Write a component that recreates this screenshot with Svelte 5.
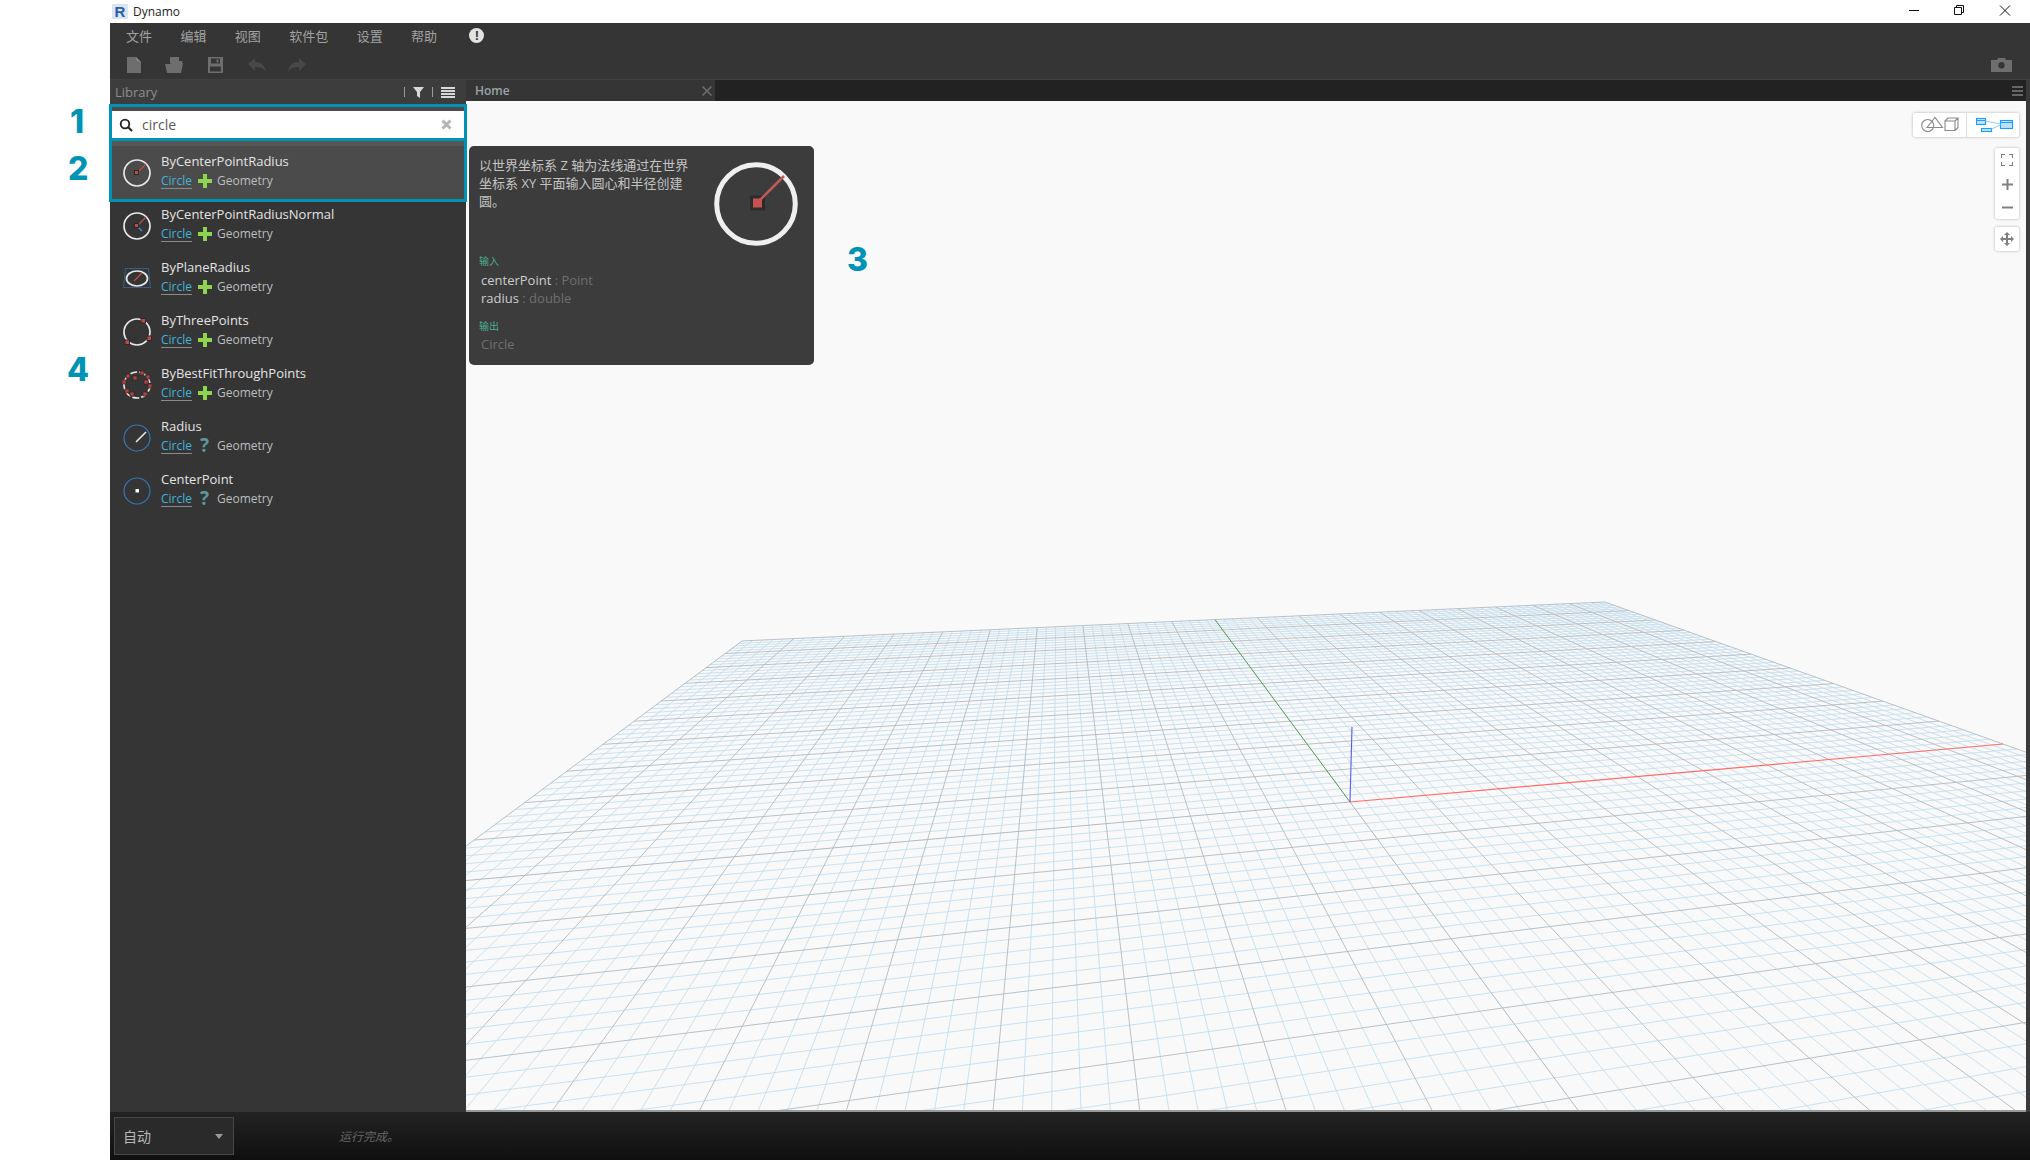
<script>
	const menus = ['文件', '编辑', '视图', '软件包', '设置', '帮助'];
	const results = [
		{ name: 'ByCenterPointRadius', kind: 'create', icon: 'radius' },
		{ name: 'ByCenterPointRadiusNormal', kind: 'create', icon: 'normal' },
		{ name: 'ByPlaneRadius', kind: 'create', icon: 'plane' },
		{ name: 'ByThreePoints', kind: 'create', icon: 'three' },
		{ name: 'ByBestFitThroughPoints', kind: 'create', icon: 'fit' },
		{ name: 'Radius', kind: 'query', icon: 'qradius' },
		{ name: 'CenterPoint', kind: 'query', icon: 'qcenter' }
	];

	// floor grid: unit square -> screen quad (origin, red end, far corner, green end)
	const q = [[1350, 802], [2003, 744], [1605, 602], [1215, 619.6]];
	const sx = q[0][0] - q[1][0] + q[2][0] - q[3][0];
	const sy = q[0][1] - q[1][1] + q[2][1] - q[3][1];
	const dx1 = q[1][0] - q[2][0], dx2 = q[3][0] - q[2][0];
	const dy1 = q[1][1] - q[2][1], dy2 = q[3][1] - q[2][1];
	const den = dx1 * dy2 - dx2 * dy1;
	const g = (sx * dy2 - dx2 * sy) / den;
	const h = (dx1 * sy - sx * dy1) / den;
	const a = q[1][0] - q[0][0] + g * q[1][0], b = q[3][0] - q[0][0] + h * q[3][0];
	const d = q[1][1] - q[0][1] + g * q[1][1], e = q[3][1] - q[0][1] + h * q[3][1];

	function project(u, v) {
		const w = g * u + h * v + 1;
		return [(a * u + b * v + q[0][0]) / w, (d * u + e * v + q[0][1]) / w];
	}

	// cuts the part of a segment that falls behind the camera
	function segment(u1, v1, u2, v2) {
		const w1 = g * u1 + h * v1 + 1;
		const w2 = g * u2 + h * v2 + 1;
		const min = 0.06;
		if (w1 < min && w2 < min) return null;
		if (w1 < min) {
			const t = (min - w1) / (w2 - w1);
			u1 += (u2 - u1) * t;
			v1 += (v2 - v1) * t;
		} else if (w2 < min) {
			const t = (min - w2) / (w1 - w2);
			u2 += (u1 - u2) * t;
			v2 += (v1 - v2) * t;
		}
		const [x1, y1] = project(u1, v1);
		const [x2, y2] = project(u2, v2);
		return { x1, y1, x2, y2 };
	}

	const minor = [];
	const major = [];
	for (let i = -50; i <= 50; i++) {
		const list = i % 5 === 0 ? major : minor;
		if (i === 0) continue;
		const t = i / 50;
		const s1 = segment(t, -1, t, 1);
		const s2 = segment(-1, t, 1, t);
		if (s1) list.push(s1);
		if (s2) list.push(s2);
	}
	const yAxisLow = segment(0, -1, 0, 0);
	const xAxisLow = segment(-1, 0, 0, 0);
</script>

<div class="app">
	<div class="window">
		<header class="titlebar">
			<span class="logo">R</span>
			<span class="title">Dynamo</span>
			<div class="winbtns">
				<svg width="150" height="23" viewBox="0 0 150 23">
					<path d="M29 10.5h10" stroke="#111" fill="none" />
					<path d="M74.500 7.500h7v7h-7zM76.500 7.500v-2h7v7h-2" stroke="#111" fill="none" />
					<path d="M120 5.500l10 10M130 5.500l-10 10" stroke="#111" fill="none" />
				</svg>
			</div>
		</header>

		<nav class="menubar">
			{#each menus as m}
				<span>{m}</span>
			{/each}
			<span class="notice">!</span>
		</nav>

		<div class="toolbar">
			<svg class="tool" width="14" height="16" viewBox="0 0 14 16"><path d="M0 0h9l5 5v11H0z" fill="#6e6e6e" /><path d="M9 0l1 4 4 1z" fill="#8a8a8a" /></svg>
			<svg class="tool open" width="20" height="16" viewBox="0 0 20 16"><path d="M5 0h9v4h4l-1 1v1H5z" fill="#6e6e6e" /><path d="M0 7h5l1-1h12l-2 10H2z" fill="#6e6e6e" /></svg>
			<svg class="tool save" width="15" height="16" viewBox="0 0 15 16"><path fill-rule="evenodd" d="M0 0h15v16H0zM3 1.500v5h9v-5zM2 9.500v5h11v-5z" fill="#6e6e6e" /><path d="M8.500 2.500h2v3h-2z" fill="#6e6e6e" /></svg>
			<svg class="tool undo" width="18" height="14" viewBox="0 0 18 14"><path d="M7 0v4c6 0 10 3 11 10-2-4-6-5-11-5v4L0 6z" fill="#484848" /></svg>
			<svg class="tool redo" width="18" height="14" viewBox="0 0 18 14"><path d="M11 0v4C5 4 1 7 0 14c2-4 6-5 11-5v4l7-7z" fill="#484848" /></svg>
			<svg class="camera" width="21" height="14" viewBox="0 0 21 14"><path fill-rule="evenodd" d="M0 2h6l1-2h7l1 2h6v12H0zM10.500 4a3.200 3.200 0 1 0 0 6.400 3.200 3.200 0 0 0 0-6.400z" fill="#6e6e6e" /></svg>
		</div>

		<div class="main">
			<aside class="sidebar">
				<div class="libhead">
					<span>Library</span>
					<div class="libtools">
						<i class="sep"></i>
						<svg width="11" height="11" viewBox="0 0 11 11"><path d="M0 0h11L7 5v6L4 9V5z" fill="#d8d8d8" /></svg>
						<i class="sep"></i>
						<svg width="14" height="11" viewBox="0 0 14 11"><path d="M0 0h14v2H0zM0 3h14v2H0zM0 6h14v2H0zM0 9h14v2H0z" fill="#d8d8d8" /></svg>
					</div>
				</div>
				<div class="searchwrap">
					<div class="search">
						<svg width="14" height="14" viewBox="0 0 14 14"><circle cx="6" cy="6" r="4.300" fill="none" stroke="#222" stroke-width="1.800" /><path d="M9.200 9.200L13 13" stroke="#222" stroke-width="2" /></svg>
						<span class="query">circle</span>
						<svg class="clear" width="11" height="11" viewBox="0 0 11 11"><path d="M1.500 1.500l8 8M9.500 1.500l-8 8" stroke="#b4b4b4" stroke-width="3" /></svg>
					</div>
				</div>
				<ul class="results">
					{#each results as r, i}
						<li class="row" class:selected={i === 0}>
							<svg class="nodeicon" width="30" height="30" viewBox="0 0 30 30">
								{#if r.icon === 'radius' || r.icon === 'normal'}
									<circle cx="15" cy="15" r="13" fill="none" stroke="#e8e8e8" stroke-width="1.700" />
									<path d="M15 15L24 6" stroke="#c04a4a" stroke-width="1.200" />
									{#if r.icon === 'normal'}
										<path d="M15 15l5 5" stroke="#3f87d0" stroke-width="1.500" />
									{/if}
									<rect x="12.500" y="12.500" width="4" height="4" fill="#c04a4a" stroke="#2a2a2a" />
								{:else if r.icon === 'plane'}
									<path d="M3.500 4.500h23l2 19H1.500z" fill="none" stroke="#3f87d0" stroke-dasharray="1 1" />
									<ellipse cx="15" cy="14.500" rx="10.500" ry="7.500" fill="none" stroke="#e8e8e8" stroke-width="1.700" />
									<path d="M12 17l8-8" stroke="#c04a4a" stroke-width="1.200" />
								{:else if r.icon === 'three'}
									<circle cx="15" cy="15" r="13" fill="none" stroke="#e8e8e8" stroke-width="1.700" />
									<rect x="19" y="1.500" width="4.500" height="4.500" fill="#c04a4a" stroke="#2a2a2a" />
									<rect x="25" y="19" width="4.500" height="4.500" fill="#c04a4a" stroke="#2a2a2a" />
									<rect x="3" y="23" width="4.500" height="4.500" fill="#c04a4a" stroke="#2a2a2a" />
								{:else if r.icon === 'fit'}
									<circle cx="15" cy="15" r="13" fill="none" stroke="#e8e8e8" stroke-width="1.700" stroke-dasharray="7 2" />
									{#each [[5,5],[19,2],[25,6],[12,7],[23,11],[27,15],[1,11],[4,20],[9,23],[22,23]] as p}
										<rect x={p[0] - 1} y={p[1] - 1} width="4" height="4" fill="#b93f3f" stroke="#2a2a2a" stroke-width="0.700" />
									{/each}
								{:else if r.icon === 'qradius'}
									<circle cx="15" cy="15" r="13" fill="none" stroke="#3576b8" stroke-width="1.200" />
									<path d="M14 19L24 9" stroke="#e8e8e8" stroke-width="1.600" />
								{:else}
									<circle cx="15" cy="15" r="13" fill="none" stroke="#3576b8" stroke-width="1.200" />
									<rect x="13.500" y="13" width="3.500" height="3.500" fill="#fff" />
								{/if}
							</svg>
							<div class="rowtext">
								<div class="name">{r.name}</div>
								<div class="sub">
									<span class="cat">Circle</span>
									{#if r.kind === 'create'}
										<svg class="plus" width="14" height="14" viewBox="0 0 14 14"><path d="M5 0h4v5h5v4H9v5H5V9H0V5h5z" fill="#8ed44e" /></svg>
									{:else}
										<span class="qmark">?</span>
									{/if}
									<span class="geo">Geometry</span>
								</div>
							</div>
						</li>
					{/each}
				</ul>
			</aside>

			<section class="workspace">
				<div class="tabs">
					<div class="tab">
						<span>Home</span>
						<svg width="10" height="10" viewBox="0 0 10 10"><path d="M.5.5l9 9M9.500.5l-9 9" stroke="#6f6f6f" stroke-width="1.500" /></svg>
					</div>
					<svg class="tabmenu" width="11" height="10" viewBox="0 0 11 10"><path d="M0 0h11v2H0zM0 4h11v2H0zM0 8h11v2H0z" fill="#666" /></svg>
				</div>
				<div class="canvas">
					<svg class="floor" viewBox="466 101 1560 1009" preserveAspectRatio="none">
						{#each minor as l}
							<line x1={l.x1} y1={l.y1} x2={l.x2} y2={l.y2} stroke="#c6deed" stroke-width="0.900" />
						{/each}
						{#each major as l}
							<line x1={l.x1} y1={l.y1} x2={l.x2} y2={l.y2} stroke="#b0bbc3" stroke-width="0.900" />
						{/each}
						<line x1={yAxisLow.x1} y1={yAxisLow.y1} x2={yAxisLow.x2} y2={yAxisLow.y2} stroke="#b0bbc3" />
						<line x1={xAxisLow.x1} y1={xAxisLow.y1} x2={xAxisLow.x2} y2={xAxisLow.y2} stroke="#b0bbc3" />
						<line x1={q[0][0]} y1={q[0][1]} x2={q[3][0]} y2={q[3][1]} stroke="#4f9a4f" />
						<line x1={q[0][0]} y1={q[0][1]} x2={q[1][0]} y2={q[1][1]} stroke="#ff6c6c" stroke-width="1.200" />
						<line x1="1350" y1="802" x2="1352" y2="727" stroke="#5a5ae6" stroke-width="1.100" />
					</svg>

					<div class="viewtoggle">
						<svg class="geomicon" width="53" height="24" viewBox="0 0 53 24">
							<g fill="none" stroke="#8a8a8a" stroke-width="1.100">
								<circle cx="14.700" cy="12.500" r="6" />
								<path d="M14 14.500L22 4.500l7.500 10z" />
								<path d="M32 8h10v9.500H32zM32 8l3-3h10v9.500l-3 3M42 8l3-3" />
							</g>
						</svg>
						<svg class="graphicon" width="52" height="24" viewBox="0 0 52 24">
							<g fill="#bfe1ff" stroke="#1b9cff" stroke-width="1.100">
								<rect x="9.500" y="5.500" width="9" height="6" />
								<rect x="14.500" y="15.500" width="10" height="3" />
								<rect x="33.500" y="7.500" width="12" height="8" />
							</g>
							<path d="M9.500 7.500h9M33.500 9.500h12" stroke="#1b9cff" fill="none" />
							<path d="M18.500 8l15 3M24.500 16l9-4" stroke="#8ecbff" fill="none" />
						</svg>
					</div>
					<div class="zoomctl">
						<svg width="12" height="12" viewBox="0 0 12 12"><path d="M0 4V0h4M8 0h4v4M12 8v4H8M4 12H0V8" fill="none" stroke="#808080" stroke-width="2" /></svg>
						<svg width="11" height="11" viewBox="0 0 11 11"><path d="M4.500 0h2v4.500H11v2H6.500V11h-2V6.500H0v-2h4.500z" fill="#808080" /></svg>
						<svg width="11" height="11" viewBox="0 0 11 11"><path d="M0 4.500h11v2H0z" fill="#808080" /></svg>
					</div>
					<div class="panctl">
						<svg width="14" height="14" viewBox="0 0 14 14"><path d="M7 0l3 3H8v3h3V4l3 3-3 3V8H8v3h2l-3 3-3-3h2V8H3v2L0 7l3-3v2h3V3H4z" fill="#808080" /></svg>
					</div>

					<div class="tooltip">
						<div class="tiptop">
							<p class="desc">以世界坐标系 Z 轴为法线通过在世界坐标系 XY 平面输入圆心和半径创建圆。</p>
							<svg class="tipicon" width="84" height="84" viewBox="0 0 84 84">
								<circle cx="42" cy="42" r="39.300" fill="none" stroke="#efefef" stroke-width="5" />
								<rect x="36" y="33.500" width="15" height="15" fill="#2c2c2c" />
								<path d="M43 41L70 14" stroke="#c45a5a" stroke-width="2.600" />
								<rect x="39" y="36.500" width="9" height="9" fill="#c65252" />
							</svg>
						</div>
						<div class="heading">输入</div>
						<div class="param">centerPoint<span>&nbsp;: Point</span></div>
						<div class="param">radius<span>&nbsp;: double</span></div>
						<div class="heading out">输出</div>
						<div class="param"><span>Circle</span></div>
					</div>
				</div>
			</section>
		</div>

		<footer class="statusbar">
			<div class="runmode">
				<span>自动</span>
				<i class="caret"></i>
			</div>
			<span class="runmsg">运行完成。</span>
		</footer>
	</div>

	<span class="mark m1">1</span>
	<span class="mark m2">2</span>
	<span class="mark m3">3</span>
	<span class="mark m4">4</span>
</div>

<style>
	:global(body) {
		margin: 0;
		background: #fff;
	}

	.app {
		position: relative;
		width: 2030px;
		height: 1160px;
		padding-left: 110px;
		box-sizing: border-box;
		overflow: hidden;
		font-family: 'Open Sans', 'Noto Sans CJK SC', sans-serif;
	}

	.window {
		display: flex;
		flex-direction: column;
		height: 100%;
	}

	.titlebar {
		display: flex;
		align-items: center;
		height: 23px;
		background: #fff;
		flex: none;
	}

	.logo {
		width: 16px;
		height: 15px;
		margin-left: 2px;
		background: #d9e6f2;
		color: #27609f;
		font: bold 15px/15px 'Liberation Sans', sans-serif;
		text-align: center;
	}

	.title {
		margin-left: 5px;
		font-size: 12px;
		color: #222;
	}

	.winbtns {
		margin-left: auto;
		height: 23px;
	}

	.menubar {
		display: flex;
		align-items: center;
		gap: 28.4px;
		height: 24px;
		padding-left: 16px;
		padding-bottom: 2px;
		background: #353535;
		border-bottom: 1px solid #414141;
		color: #a2a2a2;
		font-size: 13px;
		flex: none;
		margin-bottom: -1px;
	}

	.notice {
		width: 15px;
		height: 15px;
		border-radius: 50%;
		background: #e3e3e3;
		color: #353535;
		font: bold 13px/15px 'Liberation Sans', sans-serif;
		text-align: center;
		margin-left: 4px;
	}

	.toolbar {
		display: flex;
		align-items: center;
		height: 31px;
		padding-left: 17px;
		padding-right: 14px;
		background: #353535;
		flex: none;
		box-sizing: border-box;
	}

	.open {
		margin-left: 24px;
	}

	.save {
		margin-left: 23px;
	}

	.undo {
		margin-left: 25px;
	}

	.redo {
		margin-left: 22px;
	}

	.camera {
		margin-left: auto;
		margin-right: 4px;
	}

	.main {
		display: flex;
		flex: 1;
		min-height: 0;
		border-top: 1px solid #3f3f3f;
		margin-top: -1px;
	}

	.sidebar {
		width: 356px;
		flex: none;
		background: #353535;
		position: relative;
		z-index: 1;
	}

	.libhead {
		display: flex;
		align-items: center;
		justify-content: space-between;
		height: 24px;
		padding: 0 11px 0 5px;
		background: #3d3d3d;
		color: #8e8e8e;
		font-size: 13px;
	}

	.libtools {
		display: flex;
		align-items: center;
		gap: 8px;
	}

	.sep {
		width: 1px;
		height: 10px;
		background: #9a9a9a;
	}

	.searchwrap {
		margin: 0 -1px;
		border: 3px solid #0093b5;
		background: #4b4b4b;
		padding-top: 4px;
		height: 27px;
	}

	.search {
		display: flex;
		align-items: center;
		height: 27px;
		background: #fff;
		padding: 0 12px 0 7px;
	}

	.query {
		margin-left: 9px;
		font-size: 14px;
		color: #5a5a5a;
	}

	.clear {
		margin-left: auto;
	}

	.results {
		list-style: none;
		margin: 0;
		padding: 0;
	}

	.row {
		display: flex;
		align-items: flex-start;
		height: 53px;
		padding-left: 12px;
		box-sizing: border-box;
	}

	.row.selected {
		height: 61px;
		margin: 0 -1px;
		padding: 8px 0 0 10px;
		border: 3px solid #0093b5;
		border-top: 0;
		background: #4b4b4b;
		box-shadow: inset 0 5px 0 #565656;
	}

	.nodeicon {
		margin-top: 9px;
		flex: none;
	}

	.rowtext {
		margin-left: 9px;
		padding-top: 3px;
	}

	.name {
		font-size: 13px;
		line-height: 18px;
		color: #e3e3e3;
	}

	.sub {
		display: flex;
		align-items: center;
		gap: 5.5px;
		height: 19px;
		margin-top: 1px;
		font-size: 12px;
	}

	.cat {
		color: #3fb4dc;
		border-bottom: 1px solid #8a8a8a;
		line-height: 15px;
		font-weight: 500;
	}

	.plus {
		flex: none;
	}

	.qmark {
		width: 14px;
		text-align: center;
		color: #5d979b;
		font: bold 19px/19px 'Open Sans', sans-serif;
	}

	.geo {
		color: #bdbdbd;
	}

	.workspace {
		flex: 1;
		display: flex;
		flex-direction: column;
		min-width: 0;
		background: #3a3a3a;
		padding-right: 4px;
	}

	.tabs {
		display: flex;
		justify-content: space-between;
		align-items: center;
		height: 21px;
		background: #222;
		flex: none;
		padding-right: 3px;
	}

	.tab {
		display: flex;
		align-items: center;
		justify-content: space-between;
		width: 249px;
		height: 100%;
		padding: 0 3px 0 9px;
		box-sizing: border-box;
		background: #353535;
		color: #9aa3aa;
		font-size: 12px;
		font-weight: 600;
	}

	.canvas {
		position: relative;
		flex: 1;
		background: #f9f9f9;
		border-bottom: 2px solid #999;
		min-height: 0;
	}

	.floor {
		display: block;
		width: 100%;
		height: 100%;
	}

	.viewtoggle {
		position: absolute;
		top: 12px;
		right: 7px;
		display: flex;
		height: 24px;
		background: #fff;
		border-radius: 2px;
		box-shadow: 0 0 3px rgba(0, 0, 0, 0.3);
	}

	.geomicon {
		border-right: 1px solid #ddd;
	}

	.zoomctl {
		position: absolute;
		top: 47px;
		right: 7px;
		display: flex;
		flex-direction: column;
		align-items: center;
		justify-content: space-between;
		box-sizing: border-box;
		width: 24px;
		height: 71px;
		padding: 6px 0;
		background: #fff;
		border-radius: 2px;
		box-shadow: 0 0 3px rgba(0, 0, 0, 0.3);
	}

	.panctl {
		position: absolute;
		top: 126px;
		right: 7px;
		display: flex;
		align-items: center;
		justify-content: center;
		width: 24px;
		height: 24px;
		background: #fff;
		border-radius: 2px;
		box-shadow: 0 0 3px rgba(0, 0, 0, 0.3);
	}

	.tooltip {
		position: absolute;
		left: 3px;
		top: 45px;
		width: 345px;
		height: 219px;
		box-sizing: border-box;
		padding: 10px 10px;
		background: #3c3c3c;
		border-radius: 5px;
		color: #ccc;
	}

	.tiptop {
		display: flex;
		justify-content: space-between;
		height: 99px;
	}

	.desc {
		margin: 0;
		width: 212px;
		font-size: 13px;
		line-height: 18px;
		color: #c4c4c4;
	}

	.tipicon {
		margin: 6px 6px 0 0;
		flex: none;
	}

	.heading {
		font-size: 10px;
		line-height: 12px;
		color: #4cae94;
		margin-bottom: 4px;
	}

	.heading.out {
		margin-top: 13px;
		margin-bottom: 3px;
	}

	.param {
		padding-left: 2px;
		font-size: 13px;
		line-height: 18px;
		color: #cdcdcd;
	}

	.param span {
		color: #6f6f6f;
	}

	.statusbar {
		display: flex;
		align-items: center;
		height: 48px;
		padding-left: 4px;
		background: linear-gradient(#232323, #0f0f0f);
		flex: none;
	}

	.runmode {
		display: flex;
		align-items: center;
		justify-content: space-between;
		box-sizing: border-box;
		width: 120px;
		height: 38px;
		padding: 0 10px 0 8px;
		background: #2a2a2a;
		border: 1px solid #474747;
		color: #b8b8b8;
		font-size: 14px;
	}

	.caret {
		border: 4px solid transparent;
		border-top: 5px solid #999;
		border-bottom: 0;
	}

	.runmsg {
		margin-left: 105px;
		font-size: 12px;
		font-style: italic;
		color: #666;
	}

	.mark {
		position: absolute;
		font: 800 32px/32px Inter, sans-serif;
		color: #0093b5;
	}

	.m1 {
		left: 70px;
		top: 106px;
	}

	.m2 {
		left: 68px;
		top: 153px;
	}

	.m3 {
		left: 847px;
		top: 244px;
	}

	.m4 {
		left: 67px;
		top: 354px;
	}
</style>
